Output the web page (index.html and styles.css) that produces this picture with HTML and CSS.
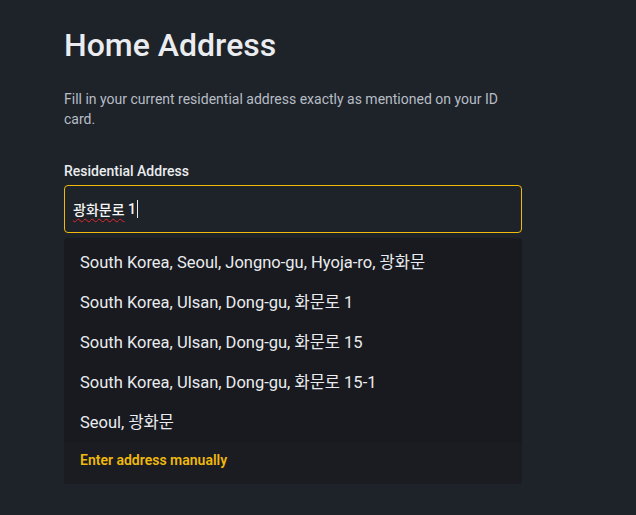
FILE: index.html
```html
<!DOCTYPE html>
<html>
<head>
    <title>Home Address</title>
    <link rel="stylesheet" href="styles.css">
</head>
<body>
    <div class="container">
        <h1>Home Address</h1>
        <p class="hint">Fill in your current residential address exactly as mentioned on your ID card.</p>

        <label class="field-label">Residential Address</label>
        <div class="field">
            <span class="misspelled">광화문로</span> 1<span class="caret"></span>
        </div>

        <div class="dropdown">
            <ul class="options">
                <li>South Korea, Seoul, Jongno-gu, Hyoja-ro, 광화문</li>
                <li>South Korea, Ulsan, Dong-gu, 화문로 1</li>
                <li>South Korea, Ulsan, Dong-gu, 화문로 15</li>
                <li>South Korea, Ulsan, Dong-gu, 화문로 15-1</li>
                <li>Seoul, 광화문</li>
            </ul>
            <div class="manual">
                <a href="#">Enter address manually</a>
            </div>
        </div>
    </div>
</body>
</html>
```

FILE: styles.css
```css
/* Home address step */
body {
    font-family: Roboto, 'Noto Sans', 'Noto Sans CJK KR', sans-serif;
    background-color: #1e2329;
    color: #eaecef;
    margin: 0;
    padding: 0;
}

.container {
    width: 458px;
    margin-left: 64px;
    padding-top: 25px;
}

h1 {
    font-size: 32px;
    font-weight: 500;
    line-height: 40px;
    margin: 0 0 24px;
    color: #eaecef;
}

.hint {
    font-size: 14px;
    line-height: 20px;
    color: #b7bdc6;
    margin: 0 0 32px;
}

.field-label {
    display: block;
    font-size: 14px;
    font-weight: 500;
    line-height: 20px;
    margin-bottom: 4px;
    color: #eaecef;
}

.field {
    box-sizing: border-box;
    height: 48px;
    border: 1px solid #f0b90b;
    border-radius: 4px;
    padding: 0 8px;
    display: flex;
    align-items: center;
    font-size: 14px;
    font-weight: 500;
    color: #f5f5f5;
    white-space: pre;
}

.misspelled {
    text-decoration: underline wavy #e0282e;
    text-underline-offset: 3px;
    text-decoration-thickness: 1px;
}

.caret {
    display: inline-block;
    width: 1px;
    height: 18px;
    background-color: #eaecef;
    margin-left: 1px;
}

.dropdown {
    margin-top: 5px;
    background-color: #181a20;
    border-radius: 4px;
    overflow: hidden;
}

.options {
    list-style: none;
    margin: 0;
    padding: 5px 0 0;
}

.options li {
    height: 40px;
    line-height: 40px;
    padding: 0 16px;
    font-size: 16.5px;
    color: #eaecef;
    cursor: pointer;
}

.manual {
    box-sizing: border-box;
    height: 41px;
    padding: 0 16px 8px;
    display: flex;
    align-items: center;
    background-color: #1a1c21;
}

.manual a {
    color: #f0b90b;
    font-size: 14px;
    font-weight: 600;
    text-decoration: none;
}
```
